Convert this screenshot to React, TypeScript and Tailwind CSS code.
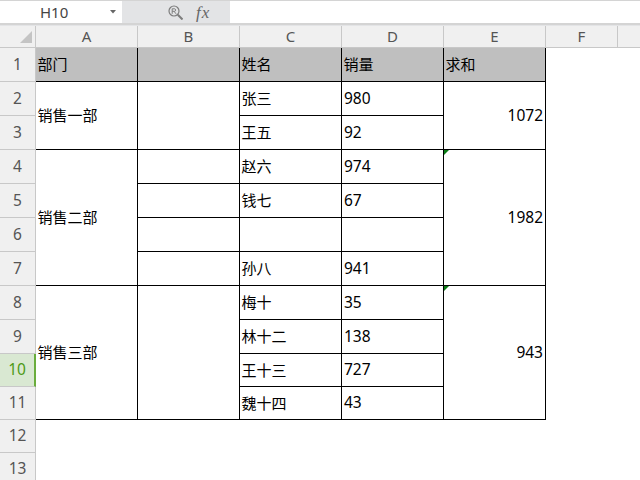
const cols = ["A", "B", "C", "D", "E", "F"];
const rowHeights = [34, 34, 34, 34, 34, 34, 34, 34, 34, 33, 33, 33, 33];

const ff = "[font-family:'Noto_Sans','Noto_Sans_CJK_SC',sans-serif]";

function T({ children }: { children?: React.ReactNode }) {
  return <span className="pl-[1.6px] text-[15px] leading-none text-black">{children}</span>;
}

function Num({ children, right }: { children: React.ReactNode; right?: boolean }) {
  return <span className={`text-[15.5px] leading-none text-black ${right ? "ml-auto pr-[2px]" : "pl-[2px]"}`}>{children}</span>;
}

function Cell({ r, c, rs = 1, header, children, mark }: { r: number; c: number; rs?: number; header?: boolean; children?: React.ReactNode; mark?: boolean }) {
  return (
    <div
      className={`relative flex items-center border-r border-b border-black ${header ? "bg-[#bfbfbf]" : "bg-white"}`}
      style={{ gridRow: `${r + 1} / span ${rs}`, gridColumn: c + 1 }}
    >
      {mark && (
        <svg className="absolute left-0 top-0" width="5" height="5" viewBox="0 0 5 5">
          <path d="M0 0H5L0 5Z" fill="#0a7d16" />
        </svg>
      )}
      {children}
    </div>
  );
}

export default function App() {
  return (
    <div className={`flex h-[480px] w-[640px] flex-col overflow-hidden bg-white ${ff}`}>
      {/* Formula bar */}
      <div className="flex h-[26px] shrink-0 flex-col border-t border-[#d4d4d4] bg-[#e3e4e6]">
        <div className="flex h-[22px] shrink-0">
          <div className="flex w-[122px] items-center bg-white pl-[40px] pr-[6px]">
            <span className="text-[15px] leading-none text-[#444]">H10</span>
            <svg className="ml-auto" width="6" height="4" viewBox="0 0 6 4"><path d="M0 0H6L3 3.5Z" fill="#666" /></svg>
          </div>
          <div className="flex w-[108px] items-center pl-[46px]">
            <svg width="15" height="15" viewBox="0 0 15 15" fill="none" stroke="#7d7d7d">
              <circle cx="6" cy="6" r="5" strokeWidth="1.2" />
              <path d="M9.8 9.8L14.5 14.5" strokeWidth="2" />
              <path d="M4.2 8.8V3.8H6.7A1.3 1.3 0 0 1 6.7 6.3H4.2M6.1 6.3L8 8.8" strokeWidth="1" />
            </svg>
            <span className="ml-[13px] text-[17px] italic leading-none tracking-[1px] text-[#666] [font-family:'Liberation_Serif',serif]">fx</span>
          </div>
          <div className="flex-1 bg-white" />
        </div>
        <div className="h-[2px] bg-[#d4d4d4]" />
      </div>

      {/* Sheet */}
      <div
        className="grid flex-1 overflow-hidden"
        style={{
          gridTemplateColumns: "36px 102px 102px 102px 102px 102px 72px 1fr",
          gridTemplateRows: `22px ${rowHeights.map((h) => `${h}px`).join(" ")}`,
        }}
      >
        {/* Corner */}
        <div className="relative border-r border-b border-[#c8c8c8] bg-[#f0f0f0]" style={{ gridRow: 1, gridColumn: 1 }}>
          <svg className="absolute bottom-[4px] right-[3px]" width="12" height="12" viewBox="0 0 12 12"><path d="M12 0V12H0Z" fill="#c4c4c4" /></svg>
        </div>

        {/* Column headers */}
        {cols.map((c, i) => (
          <div key={c} className="flex items-center justify-center border-r border-b border-[#c8c8c8] bg-[#f0f0f0] text-[15px] leading-none text-[#555]" style={{ gridRow: 1, gridColumn: i + 2 }}>
            {c}
          </div>
        ))}
        <div className="border-b border-[#c8c8c8] bg-[#f0f0f0]" style={{ gridRow: 1, gridColumn: 8 }} />

        {/* Row headers */}
        {rowHeights.map((_, i) => (
          <div
            key={i}
            className={`flex items-center justify-center border-b text-[15.5px] leading-none ${i === 9 ? "border-r-2 border-r-[#6aad3c] border-b-[#c8c8c8] bg-[#d9e8d2] text-[#4c9a15]" : "border-r border-[#c8c8c8] bg-[#f0f0f0] text-[#555]"}`}
            style={{ gridRow: i + 2, gridColumn: 1 }}
          >
            {i + 1}
          </div>
        ))}

        {/* Header row */}
        <Cell r={1} c={1} header><T>部门</T></Cell>
        <Cell r={1} c={2} header />
        <Cell r={1} c={3} header><T>姓名</T></Cell>
        <Cell r={1} c={4} header><T>销量</T></Cell>
        <Cell r={1} c={5} header><T>求和</T></Cell>

        {/* Column A */}
        <Cell r={2} c={1} rs={2}><T>销售一部</T></Cell>
        <Cell r={4} c={1} rs={4}><T>销售二部</T></Cell>
        <Cell r={8} c={1} rs={4}><T>销售三部</T></Cell>

        {/* Column B */}
        <Cell r={2} c={2} rs={2} />
        <Cell r={4} c={2} />
        <Cell r={5} c={2} />
        <Cell r={6} c={2} />
        <Cell r={7} c={2} />
        <Cell r={8} c={2} rs={4} />

        {/* Columns C, D */}
        {[
          ["张三", "980"],
          ["王五", "92"],
          ["赵六", "974"],
          ["钱七", "67"],
          ["", ""],
          ["孙八", "941"],
          ["梅十", "35"],
          ["林十二", "138"],
          ["王十三", "727"],
          ["魏十四", "43"],
        ].map(([name, n], i) => (
          <div key={i} className="contents">
            <Cell r={i + 2} c={3}><T>{name}</T></Cell>
            <Cell r={i + 2} c={4}><Num>{n}</Num></Cell>
          </div>
        ))}

        {/* Column E */}
        <Cell r={2} c={5} rs={2}><Num right>1072</Num></Cell>
        <Cell r={4} c={5} rs={4} mark><Num right>1982</Num></Cell>
        <Cell r={8} c={5} rs={4} mark><Num right>943</Num></Cell>
      </div>
    </div>
  );
}
